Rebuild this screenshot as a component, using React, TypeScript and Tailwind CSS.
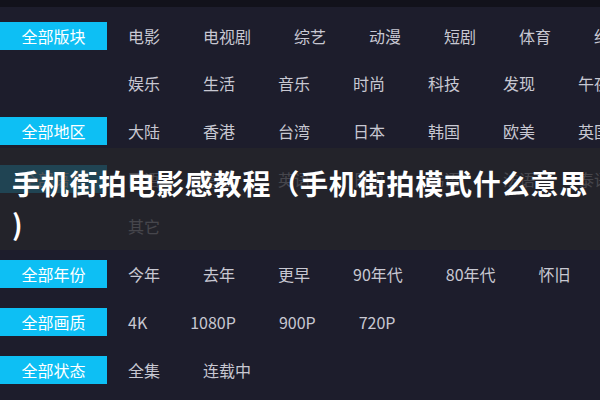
import React from "react";

type Group = { label: string; lines: string[][] };

const groups: Group[] = [
  {
    label: "全部版块",
    lines: [
      ["电影", "电视剧", "综艺", "动漫", "短剧", "体育", "纪录片"],
      ["娱乐", "生活", "音乐", "时尚", "科技", "发现", "午夜"],
    ],
  },
  {
    label: "全部地区",
    lines: [["大陆", "香港", "台湾", "日本", "韩国", "欧美", "英国"]],
  },
  {
    label: "全部语言",
    lines: [
      ["国语", "粤语", "英语", "日语", "韩语", "法语", "泰语"],
      ["其它"],
    ],
  },
  {
    label: "全部年份",
    lines: [["今年", "去年", "更早", "90年代", "80年代", "怀旧"]],
  },
  {
    label: "全部画质",
    lines: [["4K", "1080P", "900P", "720P"]],
  },
  {
    label: "全部状态",
    lines: [["全集", "连载中"]],
  },
];

export default function App() {
  return (
    <div
      className="relative w-[600px] h-[400px] overflow-hidden bg-[#1d1d2c]"
      style={{ fontFamily: '"Noto Sans CJK SC", "Noto Sans", sans-serif' }}
    >
      <div className="h-[7px] bg-[#12121b]" />
      <div className="flex flex-col gap-[20px] pt-[15px]">
        {groups.map((g) => (
          <div key={g.label} className="flex items-start">
            <div className="w-[107px] h-[28px] shrink-0 bg-[#0dbff4] text-white text-[16px] leading-[28px] text-center">
              {g.label}
            </div>
            <div className="flex flex-col gap-[19px] pl-[21px]">
              {g.lines.map((line, i) => (
                <div key={i} className="flex gap-[43px] whitespace-nowrap h-[28px] items-center">
                  {line.map((it) => (
                    <span key={it} className="text-[16px] leading-[28px] text-[#c8c8d2]">
                      {it}
                    </span>
                  ))}
                </div>
              ))}
            </div>
          </div>
        ))}
      </div>
      <div className="absolute left-0 right-0 top-[148px] h-[102px] bg-[rgba(37,38,43,0.8)] pl-[12px] pr-[8px] pt-[15px]">
        <div className="text-white font-bold text-[28px] leading-[40px] tracking-[0.8px] [line-break:anywhere]">
          手机街拍电影感教程（手机街拍模式什么意思)
        </div>
      </div>
    </div>
  );
}
